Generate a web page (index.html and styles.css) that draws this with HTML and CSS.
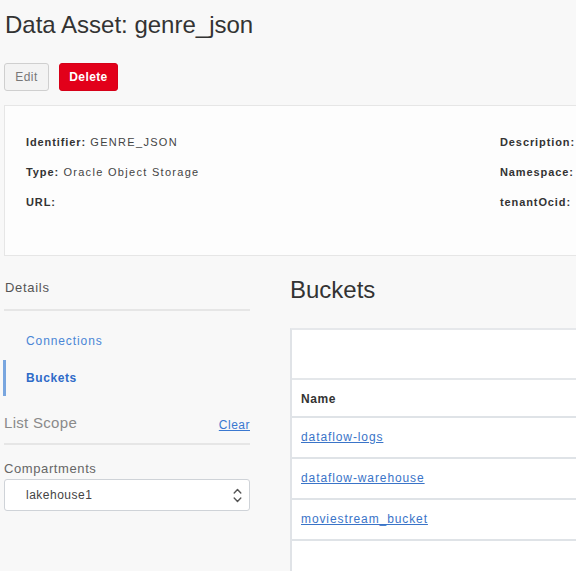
FILE: index.html
```html
<!DOCTYPE html>
<html lang="en">
<head>
<meta charset="utf-8">
<title>Data Asset: genre_json</title>
<link rel="stylesheet" href="styles.css">
</head>
<body>
<div class="page">
  <h1 class="title">Data Asset: genre_json</h1>
  <div class="actions">
    <button class="btn btn-edit">Edit</button>
    <button class="btn btn-delete">Delete</button>
  </div>

  <section class="info-card">
    <div class="info-col info-left">
      <div class="info-row"><span class="lbl">Identifier:</span> GENRE_JSON</div>
      <div class="info-row"><span class="lbl">Type:</span> Oracle Object Storage</div>
      <div class="info-row"><span class="lbl">URL:</span></div>
    </div>
    <div class="info-col info-right">
      <div class="info-row"><span class="lbl">Description:</span></div>
      <div class="info-row"><span class="lbl">Namespace:</span></div>
      <div class="info-row"><span class="lbl">tenantOcid:</span></div>
    </div>
  </section>

  <div class="layout">
    <aside class="sidebar">
      <div class="side-head">Details</div>
      <nav class="side-nav">
        <a class="nav-item">Connections</a>
        <a class="nav-item active">Buckets</a>
      </nav>
      <div class="scope-head">
        <span class="scope-title">List Scope</span>
        <a class="scope-clear">Clear</a>
      </div>
      <div class="field-label">Compartments</div>
      <div class="select">
        <span class="select-value">lakehouse1</span>
        <svg class="select-icon" width="9" height="15" viewBox="0 0 9 15" aria-hidden="true">
          <path d="M1.2 5 L4.5 1.6 L7.8 5" fill="none" stroke="#555" stroke-width="1.4" stroke-linecap="round" stroke-linejoin="round"/>
          <path d="M1.2 10 L4.5 13.4 L7.8 10" fill="none" stroke="#555" stroke-width="1.4" stroke-linecap="round" stroke-linejoin="round"/>
        </svg>
      </div>
    </aside>

    <main class="main">
      <h2 class="section-title">Buckets</h2>
      <div class="table">
        <div class="table-toolbar"></div>
        <div class="table-row table-head">Name</div>
        <div class="table-row"><a class="link">dataflow-logs</a></div>
        <div class="table-row"><a class="link">dataflow-warehouse</a></div>
        <div class="table-row"><a class="link">moviestream_bucket</a></div>
        <div class="table-empty"></div>
      </div>
    </main>
  </div>
</div>
</body>
</html>
```

FILE: styles.css
```css
html, body {
  margin: 0;
  padding: 0;
  background: #f8f8f8;
}

body {
  font-family: "Liberation Sans", Arial, Helvetica, sans-serif;
  color: #333;
}

.page {
  padding: 0 0 0 4px;
  width: 576px;
  height: 571px;
  box-sizing: border-box;
  overflow: hidden;
}

.title {
  margin: 11px 0 0 1px;
  font-size: 24px;
  line-height: 28px;
  font-weight: normal;
  color: #333;
}

.actions {
  display: flex;
  gap: 10px;
  margin-top: 24px;
}

.btn {
  height: 28px;
  border-radius: 3px;
  font-family: inherit;
  font-size: 12px;
  padding: 0;
  cursor: pointer;
}

.btn-edit {
  width: 45px;
  background: #f3f3f3;
  border: 1px solid #cfcfcf;
  color: #777;
  letter-spacing: 0.4px;
}

.btn-delete {
  width: 59px;
  background: #e2001a;
  border: 1px solid #d60018;
  color: #fff;
  font-weight: bold;
  letter-spacing: 0.4px;
}

.info-card {
  margin-top: 14px;
  margin-right: -40px;
  height: 151px;
  box-sizing: border-box;
  background: #fdfdfd;
  border: 1px solid #e6e6e6;
  padding: 21px 0 0 21px;
  display: flex;
}

.info-left {
  width: 474px;
  flex: none;
}

.info-right {
  flex: none;
}

.info-row {
  height: 30px;
  line-height: 30px;
  font-size: 11px;
  letter-spacing: 1.3px;
  color: #444;
  white-space: nowrap;
}

.lbl {
  font-weight: bold;
  color: #333;
  letter-spacing: 0.9px;
}

.layout {
  display: flex;
  gap: 40px;
}

.sidebar {
  width: 246px;
  flex: none;
}

.side-head {
  margin-top: 22px;
  padding: 0 0 11px 1px;
  line-height: 20px;
  font-size: 13px;
  letter-spacing: 0.7px;
  color: #555;
  border-bottom: 2px solid #e6e6e6;
}

.side-nav {
  display: flex;
  flex-direction: column;
  margin-top: 12px;
}

.nav-item {
  display: block;
  height: 36px;
  line-height: 36px;
  padding-left: 20px;
  font-size: 12px;
  letter-spacing: 0.9px;
  color: #4a86d6;
  border-left: 3px solid transparent;
  margin-left: -1px;
}

.nav-item.active {
  color: #2f6bc8;
  font-weight: bold;
  letter-spacing: 0.6px;
  border-left-color: #79a6df;
  margin-top: 1px;
}

.scope-head {
  display: flex;
  justify-content: space-between;
  align-items: center;
  margin-top: 14px;
  height: 24px;
  padding-bottom: 9px;
  border-bottom: 2px solid #e6e6e6;
}

.scope-title {
  font-size: 15px;
  letter-spacing: 0.3px;
  color: #8a8a8a;
}

.scope-clear {
  font-size: 12px;
  letter-spacing: 0.5px;
  color: #3a78d0;
  text-decoration: underline;
  margin-top: 5px;
}

.field-label {
  margin-top: 16px;
  line-height: 16px;
  font-size: 13px;
  letter-spacing: 0.6px;
  color: #666;
}

.select {
  margin-top: 2px;
  height: 32px;
  box-sizing: border-box;
  background: #fff;
  border: 1px solid #cfd3d8;
  border-radius: 3px;
  display: flex;
  align-items: center;
  justify-content: space-between;
  padding: 0 7px 0 21px;
}

.select-value {
  font-size: 12px;
  letter-spacing: 0.5px;
  color: #444;
}

.select-icon {
  display: block;
}

.main {
  flex: 1;
  margin-right: -40px;
}

.section-title {
  margin: 19px 0 0 0;
  line-height: 30px;
  font-size: 24px;
  font-weight: normal;
  color: #333;
}

.table {
  margin-top: 23px;
  background: #fff;
  border-left: 2px solid #e0e3e7;
  border-top: 2px solid #e6e8eb;
}

.table-toolbar {
  height: 48px;
  border-bottom: 2px solid #e4e7ea;
}

.table-row {
  height: 39px;
  line-height: 39px;
  padding-left: 9px;
  border-bottom: 2px solid #dfe3e7;
  font-size: 12px;
  letter-spacing: 0.9px;
}

.table-head {
  font-weight: bold;
  color: #333;
  letter-spacing: 0.6px;
  height: 36px;
  line-height: 38px;
}

.link {
  color: #3a74c8;
  text-decoration: underline;
}

.table-empty {
  height: 40px;
}
```
